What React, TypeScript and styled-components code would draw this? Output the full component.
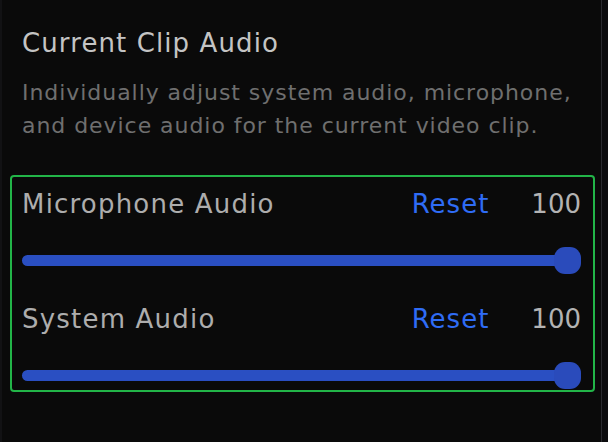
import React from "react";
import styled, { createGlobalStyle } from "styled-components";

const Global = createGlobalStyle`
  html, body { margin: 0; padding: 0; background: #0a0a0a; }
  body { font-family: "DejaVu Sans", "Noto Sans", sans-serif; }
`;

const Frame = styled.div`
  width: 608px;
  height: 442px;
  box-sizing: border-box;
  display: flex;
  background: #0a0a0a;
  overflow: hidden;
`;

const EdgeLeft = styled.div`
  width: 2px;
  background: #121214;
`;

const Panel = styled.div`
  flex: 1;
  display: flex;
  flex-direction: column;
  padding: 27px 0 0 8px;
`;

const Scroll = styled.div`
  width: 6px;
  display: flex;
  flex-direction: column;
  border-left: 1px solid #2a2a2f;
  background: #0c0c0e;
`;

const Header = styled.div`
  padding-left: 12px;
`;

const Title = styled.h2`
  margin: 0;
  font-size: 26px;
  line-height: 32px;
  font-weight: 400;
  letter-spacing: 1.1px;
  color: #c4c4c4;
`;

const Description = styled.p`
  margin: 17px 0 0;
  width: 556px;
  font-size: 22px;
  line-height: 33px;
  font-weight: 400;
  letter-spacing: 0.95px;
  color: #6f6f6f;
`;

const Box = styled.div`
  margin-top: 33px;
  width: 585px;
  height: 217px;
  box-sizing: border-box;
  border: 2px solid #22b548;
  border-radius: 4px;
  padding: 11px 12px 0 10px;
  display: flex;
  flex-direction: column;
  gap: 29px;
`;

const Channel = styled.div`
  display: flex;
  flex-direction: column;
  gap: 27px;
`;

const ChannelHead = styled.div`
  height: 32px;
  display: flex;
  align-items: center;
  font-size: 26px;
  line-height: 32px;
  letter-spacing: 1.2px;
`;

const Label = styled.span`
  flex: 1;
  color: #adadad;
`;

const ResetButton = styled.button`
  background: none;
  border: none;
  padding: 0;
  margin-right: 42px;
  font: inherit;
  letter-spacing: 1px;
  color: #2f6cf5;
  cursor: pointer;
`;

const Value = styled.span`
  color: #b3b3b3;
  letter-spacing: 0;
`;

const SliderWrap = styled.div`
  position: relative;
  height: 27px;
  display: flex;
  align-items: center;
`;

const Track = styled.div`
  flex: 1;
  height: 11px;
  border-radius: 6px;
  background: #2a4fc2;
`;

const Thumb = styled.div`
  position: absolute;
  top: 0;
  width: 27px;
  height: 27px;
  border-radius: 11px;
  background: #2a4bbb;
  transform: translateX(-100%);
`;

type ChannelProps = { label: string; value: number };

function AudioChannel({ label, value }: ChannelProps) {
  return (
    <Channel>
      <ChannelHead>
        <Label>{label}</Label>
        <ResetButton>Reset</ResetButton>
        <Value>{value}</Value>
      </ChannelHead>
      <SliderWrap>
        <Track />
        <Thumb style={{ left: `${value}%` }} />
      </SliderWrap>
    </Channel>
  );
}

export default function App() {
  return (
    <>
      <Global />
      <Frame>
        <EdgeLeft />
        <Panel>
          <Header>
            <Title>Current Clip Audio</Title>
            <Description>
              Individually adjust system audio, microphone, and device audio for the current video clip.
            </Description>
          </Header>
          <Box>
            <AudioChannel label="Microphone Audio" value={100} />
            <AudioChannel label="System Audio" value={100} />
          </Box>
        </Panel>
        <Scroll />
      </Frame>
    </>
  );
}
